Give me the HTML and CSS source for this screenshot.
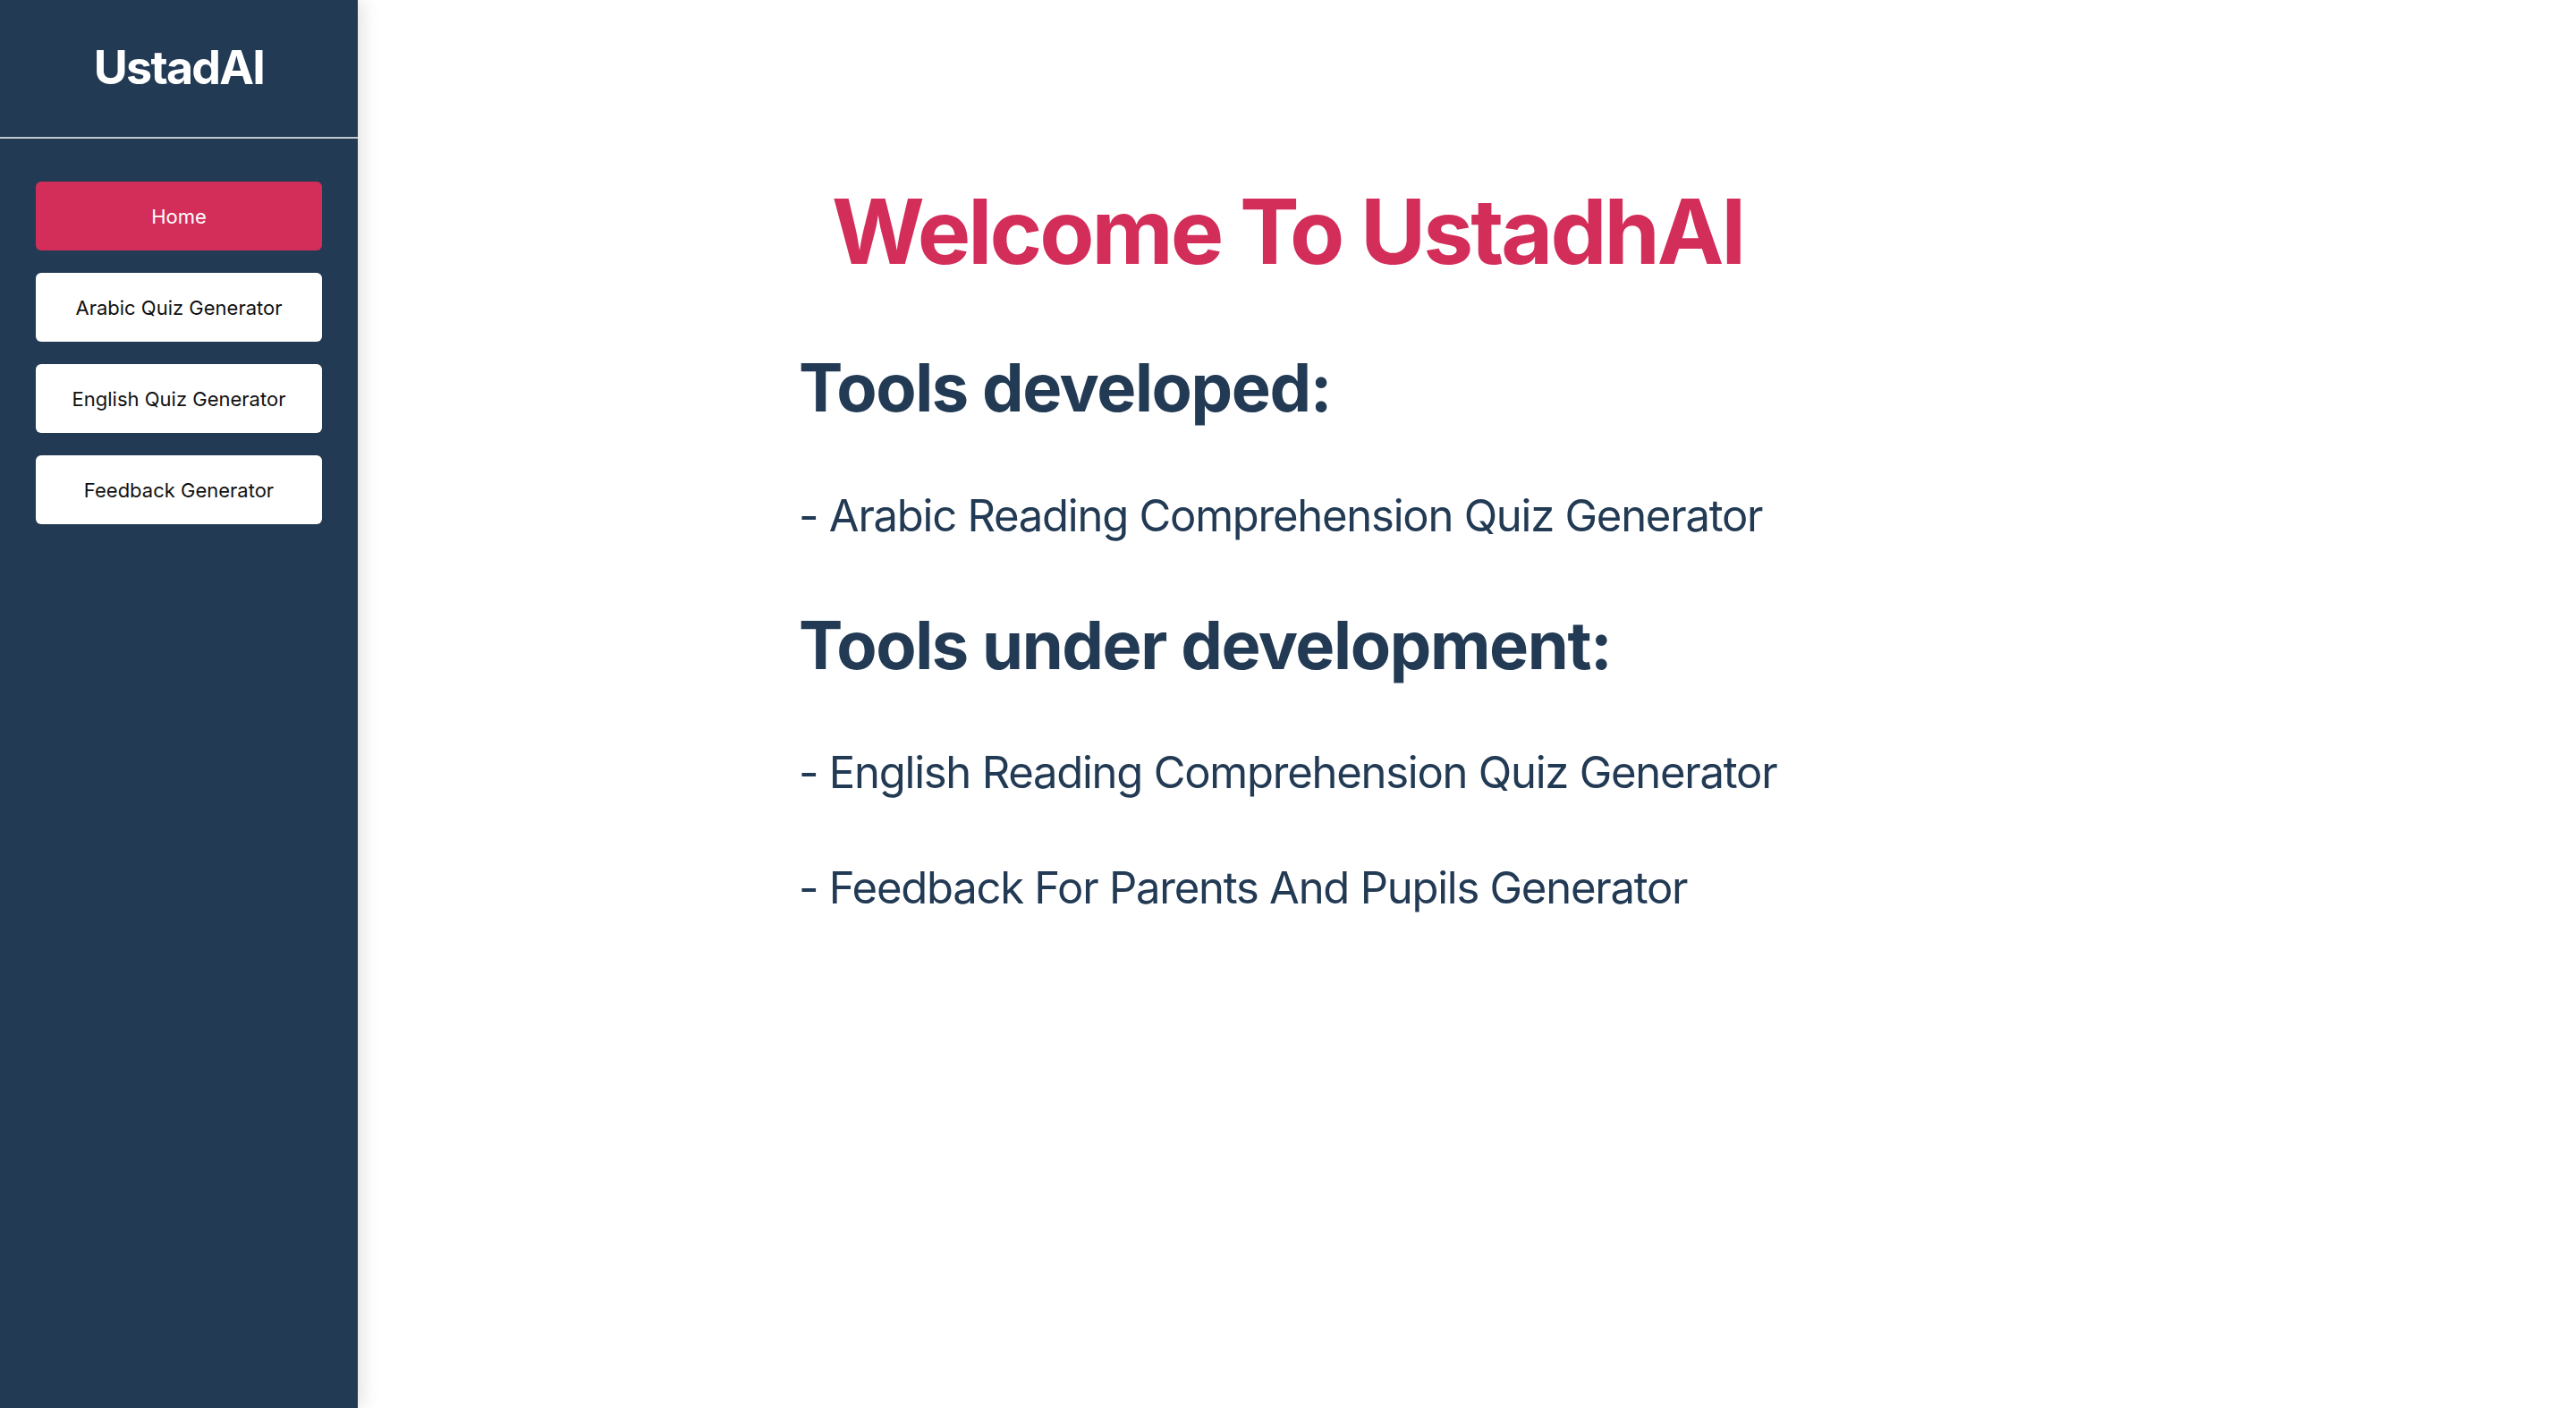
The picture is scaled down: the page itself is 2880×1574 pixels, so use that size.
FILE: index.html
```html
<!DOCTYPE html>
<html lang="en">
<head>
<meta charset="utf-8">
<title>UstadAI</title>
<link rel="stylesheet" href="styles.css">
</head>
<body>
<div class="app">
  <aside class="sidebar">
    <div class="brand">UstadAI</div>
    <nav class="nav">
      <button class="nav-btn active">Home</button>
      <button class="nav-btn">Arabic Quiz Generator</button>
      <button class="nav-btn">English Quiz Generator</button>
      <button class="nav-btn">Feedback Generator</button>
    </nav>
  </aside>
  <main class="main">
    <section class="content">
      <h1 class="welcome">Welcome To UstadhAI</h1>
      <h2 class="section-title">Tools developed:</h2>
      <p class="tool">- Arabic Reading Comprehension Quiz Generator</p>
      <h2 class="section-title">Tools under development:</h2>
      <p class="tool">- English Reading Comprehension Quiz Generator</p>
      <p class="tool">- Feedback For Parents And Pupils Generator</p>
    </section>
  </main>
</div>
</body>
</html>
```
FILE: styles.css
```css
* { box-sizing: border-box; }
html, body { margin: 0; padding: 0; height: 100%; }
body {
  font-family: Inter, "Noto Sans", sans-serif;
  background: #ffffff;
  color: #223a54;
}
.app {
  display: flex;
  height: 100vh;
}
.sidebar {
  width: 400px;
  flex: 0 0 400px;
  background: #223a54;
  box-shadow: 4px 0 20px rgba(0, 0, 0, 0.13);
  display: flex;
  flex-direction: column;
  z-index: 1;
}
.brand {
  height: 155px;
  border-bottom: 2px solid #c3c8ce;
  color: #ffffff;
  font-weight: 700;
  font-size: 52px;
  letter-spacing: -1.8px;
  text-align: center;
  padding-top: 50px;
  line-height: 1;
}
.nav {
  display: flex;
  flex-direction: column;
  gap: 25px;
  padding: 48px 40px 0;
}
.nav-btn {
  height: 77px;
  border: none;
  border-radius: 6px;
  background: #ffffff;
  color: #111111;
  font-family: Inter, "Noto Sans", sans-serif;
  font-size: 22px;
  padding: 0;
}
.nav-btn.active {
  background: #d32e5a;
  color: #ffffff;
}
.main {
  flex: 1;
  padding: 199px 0 0 493px;
}
.content {
  display: inline-flex;
  flex-direction: column;
  gap: 70px;
}
.welcome {
  margin: 0;
  text-align: center;
  color: #d32e5a;
  font-size: 100px;
  font-weight: 700;
  line-height: 1.2;
  letter-spacing: -3px;
}
.section-title {
  margin: 0;
  font-size: 74px;
  font-weight: 700;
  line-height: 1.2;
  letter-spacing: -1.4px;
}
.tool {
  margin: 0;
  font-size: 49px;
  font-weight: 400;
  line-height: 1.2;
  letter-spacing: -1.25px;
}
```
